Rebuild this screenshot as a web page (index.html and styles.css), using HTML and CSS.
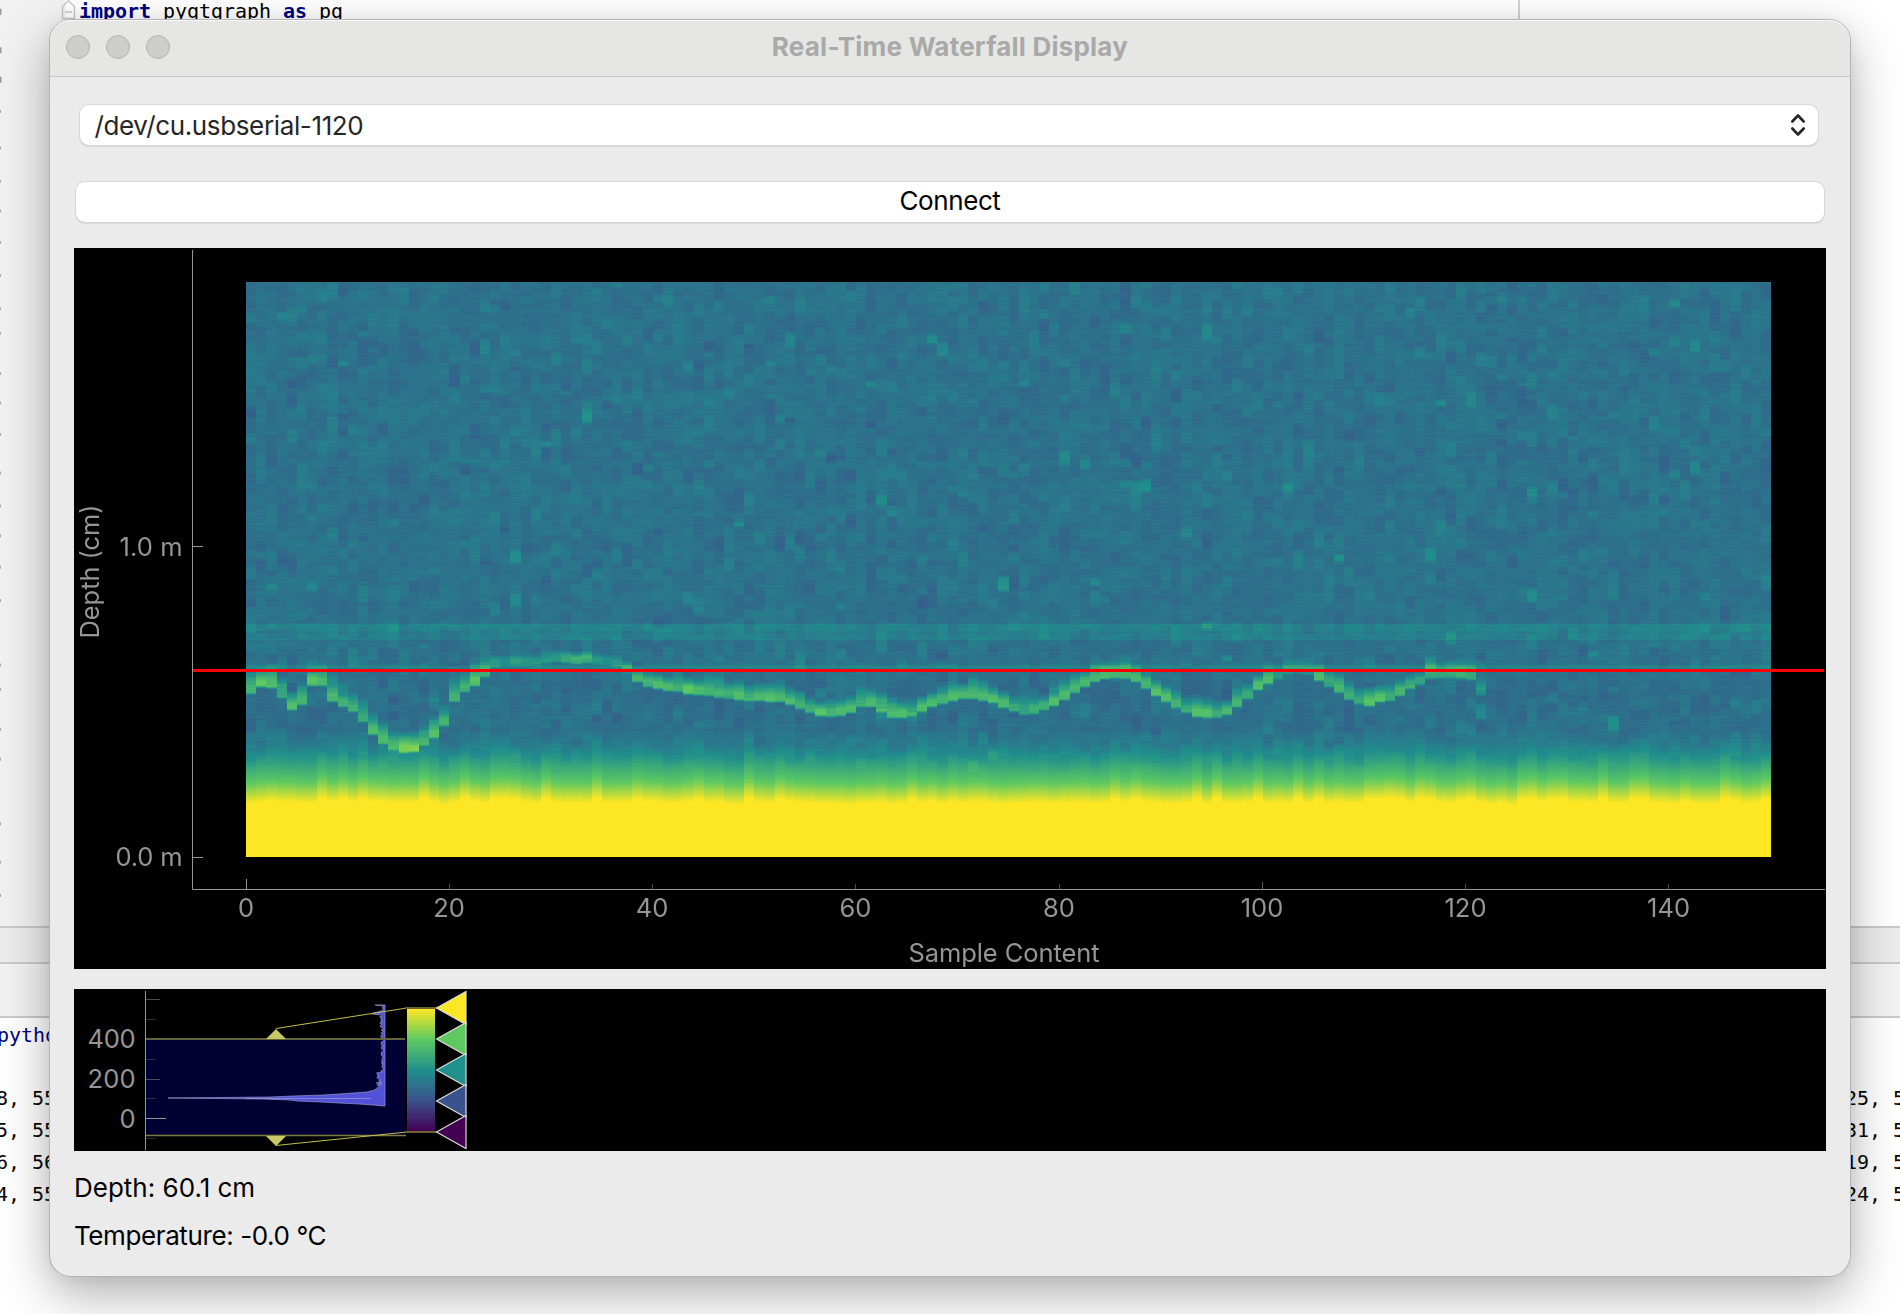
FILE: index.html
```html
<!DOCTYPE html>
<html lang="en">
<head>
<meta charset="utf-8">
<title>Real-Time Waterfall Display</title>
<link rel="stylesheet" href="styles.css">
</head>
<body>
<div class="ide">
  <div class="editor">
    <svg class="fold" width="15" height="20" viewBox="0 0 15 20"><path d="M1.500 18.500V6.500L7.500 .8l6 5.700v12zM4 12h7" fill="none" stroke="#c4c4c4" stroke-width="1.400"/></svg>
    <code class="code"><b>import</b> pyqtgraph <b>as</b> pg</code>
  </div>
  <div class="strip tabs"></div>
  <div class="strip tools"></div>
  <div class="console">
    <div class="path">pytho</div>
    <div class="line"><span>8, 55</span><span>25, 5</span></div>
    <div class="line"><span>5, 55</span><span>31, 5</span></div>
    <div class="line"><span>6, 56</span><span>19, 5</span></div>
    <div class="line"><span>4, 55</span><span>24, 5</span></div>
  </div>
</div>
<svg class="gutter" id="gutter" width="3" height="920"></svg>

<main class="window">
  <header class="titlebar">
    <i class="light"></i><i class="light"></i><i class="light"></i>
    <h1>Real-Time Waterfall Display</h1>
  </header>
  <div class="content">
    <div class="combo"><span>/dev/cu.usbserial-1120</span>
      <svg width="16" height="24" viewBox="0 0 16 24"><path d="M2.300 8.500L8 2.500l5.700 6M2.300 15.500L8 21.500l5.700-6" fill="none" stroke="#262626" stroke-width="2.600" stroke-linecap="round" stroke-linejoin="round"/></svg>
    </div>
    <button class="connect">Connect</button>
    <section class="plot">
      <canvas id="waterfall" width="1525" height="575"></canvas>
      <svg class="overlay" width="1752" height="722" viewBox="0 0 1752 722">
        <g stroke="#969696" stroke-width="1">
          <path d="M118.500 3V642.500H1751M118.500 299.500H129M118.500 610.500H129" fill="none"/>
          <path d="M172.500 632V642"/>
          <path d="M1188.500 635V642" opacity=".6"/>
          <path d="M375.500 637V642M578.500 637V642M781.500 637V642M985.500 637V642M1391.500 637V642M1594.500 637V642" opacity=".5"/>
        </g>
        <path d="M119 423.500H1750" stroke="#f00" stroke-width="3"/>
        <g class="axis" text-anchor="middle">
          <text x="172" y="670">0</text><text x="375" y="670">20</text><text x="578" y="670">40</text><text x="781.500" y="670">60</text><text x="985" y="670">80</text><text x="1188" y="670">100</text><text x="1391.500" y="670">120</text><text x="1594.500" y="670">140</text>
          <text x="930" y="715" textLength="191">Sample Content</text>
          <text transform="translate(25 324.500) rotate(-90)" textLength="134">Depth (cm)</text>
        </g>
        <g class="axis" text-anchor="end">
          <text x="108.500" y="308.500" textLength="63">1.0 m</text><text x="108.500" y="618.500" textLength="67">0.0 m</text>
        </g>
      </svg>
    </section>
    <section class="histogram">
      <svg width="500" height="162" viewBox="0 0 500 162">
        <defs><linearGradient id="viridis" x1="0" y1="1" x2="0" y2="0"><stop offset="0" stop-color="#440154"/><stop offset=".25" stop-color="#3a528b"/><stop offset=".5" stop-color="#20908c"/><stop offset=".75" stop-color="#5ec961"/><stop offset="1" stop-color="#fde724"/></linearGradient></defs>
        <rect x="72" y="50" width="259" height="97" fill="#000032"/>
        <g stroke="#969696" fill="none">
          <path d="M71.500 2V161"/><path d="M72 129.500H92"/>
          <path d="M72 10.500H86M72 50.500H86M72 90.500H86" opacity=".5"/>
          <path d="M72 30.500H82M72 70.500H82M72 109.500H82M72 149.500H82" opacity=".3"/>
        </g>
        <g class="axis" text-anchor="end"><text x="61.500" y="59" textLength="48">400</text><text x="61.500" y="99" textLength="48">200</text><text x="61.500" y="139">0</text></g>
        <path id="hist" fill="#5252d8" stroke="#a0a0d0" stroke-opacity=".8" stroke-width=".8"/>
        <path d="M72 50H331" stroke="#64643c" stroke-width="2"/>
        <path d="M72 146.500H332" stroke="#7d7d41" stroke-width="1.500"/>
        <path d="M192 50L202 40l10 10zM192 147l10 10 10-10z" fill="#c8c864"/>
        <path d="M202 39.500L333 19M202 156.500L333 143" fill="none" stroke="#c0c04c" stroke-width="1"/>
        <path d="M172 109.500H297" stroke="#b8b4dc" stroke-opacity=".5"/>
        <rect x="333" y="20" width="28" height="122" fill="url(#viridis)"/>
        <path d="M331 19H363M331 143H363" stroke="#6a6430" stroke-width="2"/>
        <g stroke="#ddd" stroke-width="1.200">
          <path d="M362.500 19L392 2.500V35.500z" fill="#fde724"/>
          <path d="M362.500 50L392 33.500V66.500z" fill="#5ec961"/>
          <path d="M362.500 81L392 64.500V97.500z" fill="#20908c"/>
          <path d="M362.500 112L392 95.500V128.500z" fill="#3a528b"/>
          <path d="M362.500 143L392 126.500V159.500z" fill="#440154"/>
        </g>
      </svg>
    </section>
    <p class="status depth">Depth: 60.1 cm</p>
    <p class="status temp">Temperature: -0.0 °C</p>
  </div>
</main>
<script src="app.js"></script>
</body>
</html>
```

FILE: styles.css
```css
* { box-sizing: border-box; }
body { margin: 0; width: 1900px; height: 1314px; overflow: hidden; position: relative; background: #fff; font-family: Inter, "Liberation Sans", sans-serif; }

.ide { display: flex; flex-direction: column; height: 1314px; font: 20px/32px "DejaVu Sans Mono", "Liberation Mono", monospace; letter-spacing: -.04px; }
.editor { height: 926px; display: flex; align-items: flex-start; width: 1520px; padding-left: 61px; border-right: 2px solid #d2d2d2; background: linear-gradient(90deg, #f1f1f1 66px, #fff 66px); }
.fold { flex: none; margin-right: 3px; }
.code { font: inherit; white-space: pre; line-height: 22px; }
.code b { color: #000080; }
.strip { flex: none; border-top: 2px solid #c9c9c9; background: #f2f2f2; }
.tabs { height: 36px; background: #ececec; }
.tools { height: 54px; }
.console { flex: 1; border-top: 2px solid #c9c9c9; color: #080808; }
.path { color: #00007f; margin: 1px 0 31px -3px; }
.line { display: flex; justify-content: space-between; margin-left: -4px; width: 1909px; }
.gutter { position: absolute; left: 0; top: 0; }

.window { position: absolute; left: 50px; top: 20px; width: 1800px; height: 1256px; background: #ebebeb; border-radius: 21px; box-shadow: 0 0 0 1px #b4b4b4, 0 18px 50px rgba(0,0,0,.32), 0 0 16px rgba(0,0,0,.06); overflow: visible; }
.titlebar { height: 57px; display: flex; align-items: center; gap: 16px; padding: 0 0 2px 16px; background: #e6e6e4; border-bottom: 1px solid #c6c6c6; border-radius: 21px 21px 0 0; box-shadow: inset 0 1px #f8f8f8; }
.light { width: 24px; height: 24px; border-radius: 50%; background: #cdcdcc; border: 1px solid #b4b4b3; }
h1 { flex: 1; margin: 0 136px 2px 0; text-align: center; font-size: 26px; font-weight: 700; letter-spacing: .22px; color: #a9a9a8; }
.content { padding: 28px 24px 0; display: flex; flex-direction: column; }
.combo, .connect { background: #fff; border: 0; border-radius: 9px; box-shadow: 0 0 0 1px #d8d8d8, 0 1px 1.500px #999; font: 26px Inter, sans-serif; }
.combo { height: 40px; margin: 0 8px 0 5.500px; padding: 0 12px 0 15px; display: flex; align-items: center; justify-content: space-between; color: #262626; letter-spacing: -.36px; }
.connect { height: 40px; margin: 37px 2px 0; padding: 0 0 4px; color: #000; letter-spacing: -.42px; }
.plot { position: relative; margin-top: 26px; height: 721px; background: #000; padding: 34px 0 0 172px; }
.plot canvas { display: block; }
.overlay { position: absolute; left: 0; top: -1px; }
.axis { font-size: 25.500px; fill: #969696; }
.histogram { margin-top: 20px; height: 162px; background: #000; }
.histogram svg { display: block; }
.status { margin: 0; font-size: 26px; line-height: 32px; color: #000; }
.depth { margin-top: 21px; }
.temp { margin-top: 16px; letter-spacing: -.4px; }
```

FILE: app.js
```js
// Seeded generator so that every load draws the same echo data
let seed = 20417;
function rnd() {
  seed = (seed + 0x6D2B79F5) | 0;
  let t = Math.imul(seed ^ (seed >>> 15), 1 | seed);
  t = (t + Math.imul(t ^ (t >>> 7), 61 | t)) ^ t;
  return ((t ^ (t >>> 14)) >>> 0) / 4294967296;
}
const gauss = () => rnd() + rnd() + rnd() + rnd() - 2;

const STOPS = [[68, 1, 84], [58, 82, 139], [32, 144, 140], [94, 201, 97], [253, 231, 36]];
function viridis(t) {
  t = Math.max(0, Math.min(1, t)) * 4;
  const i = Math.min(3, Math.floor(t)), f = t - i;
  return STOPS[i].map((c, k) => c + (STOPS[i + 1][k] - c) * f);
}

// Lower edge of the bottom echo for each sample, in pixels from the top of the image
const ECHO = [413,406,407,417,429,424,405,405,421,426,431,441,454,463,469,472,471,465,457,445,421,411,405,396,386,385,385,385,384,382,381,382,383,382,383,384,386,392,401,406,408,410,411,413,414,
  415,417,418,419,420,420,421,421,424,428,432,435,436,435,432,426,426,431,437,437,435,431,426,423,420,418,418,420,422,427,431,434,433,429,425,419,412,406,401,398,397,398,401,408,415,421,427,432,436,437,437,434,426,418,409,
  403,398,393,392,394,400,406,412,419,423,425,421,420,415,408,404,398,397,397,397,399,414];

const canvas = document.getElementById('waterfall');
const ctx = canvas.getContext('2d');
const W = 1525, H = 575, N = 150;
const img = ctx.createImageData(W, H);
const rows = Array.from({ length: H }, () => gauss() * 0.009);
const ramp = [[448, 0], [460, .03], [473, .11], [500, .37], [521, .63], [530, .8]];
function floorEcho(y) {
  if (y <= ramp[0][0]) return 0;
  for (let i = 1; i < ramp.length; i++) {
    if (y < ramp[i][0]) {
      const [a, u] = ramp[i - 1], [b, v] = ramp[i];
      return u + (v - u) * (y - a) / (b - a);
    }
  }
  return 1;
}
for (let c = 0; c < N; c++) {
  const x0 = Math.round(c * W / N), x1 = Math.round((c + 1) * W / N);
  const shift = rnd() < .2 ? 3 + rnd() * 2 : gauss() * 1.4;
  const strength = .24 + rnd() * .1, tail = (c < 23 ? 13 : 9) + rnd() * 9;
  const bias = gauss() * .006;
  let slow = 0, target = 0, left = 0;
  for (let y = 0; y < H; y++) {
    if (left-- <= 0) { target = gauss() * .042; if (rnd() < .012) target += .085; left = 2 + rnd() * 12; }
    slow += (target - slow) * .4;
    let t = .38 + bias + slow + gauss() * .016 + rows[y];
    if (y > 341 && y < 358) t += y < 349 ? .075 : (y > 351 ? .06 : .035);
    if (y > 382 && y < 388) t += .07;
    if (y > 400 && y < 450) t -= .012;
    if (c < ECHO.length) {
      const d = ECHO[c] - y;
      if (d > 0 && d < tail + 8) {
        const high = c > 23 && c < 38;
        const amp = (c === 15 || c === 16) ? .45 : high ? (c > 30 && c < 34 ? .24 : .15) : c === 121 ? .15 : (c > 100 && c < 105) ? .15 : c > 114 ? .21 : strength;
        t += amp * (d < 3 ? d / 3 : d < 8 ? 1 : Math.max(0, 1 - (d - 8) / (high ? 6 : tail)));
      }
    }
    const f = floorEcho(y + shift);
    t = f > 0 ? t * (1 - Math.min(1, f * 3)) + (.378 * Math.min(1, f * 3)) + f : t;
    const rgb = viridis(t);
    for (let x = x0; x < x1; x++) {
      const p = (y * W + x) * 4;
      img.data[p] = rgb[0]; img.data[p + 1] = rgb[1]; img.data[p + 2] = rgb[2]; img.data[p + 3] = 255;
    }
  }
}
ctx.putImageData(img, 0, 0);

// Level histogram: counts grow leftwards from the baseline
const BASE = 311;
let d = `M${BASE} 16`;
const peak = { 101: 10, 102: 14, 103: 18, 104: 32, 105: 46, 106: 62, 107: 92, 108: 115, 109: 217, 110: 122, 111: 95, 112: 88, 113: 64, 114: 46, 115: 26, 116: 12 };
for (let y = 16; y <= 117; y++) {
  let w;
  if (y < 17) w = 10;
  else if (y < 22) w = 1 + rnd() * 2;
  else if (y < 28) w = 3 + rnd() * 9 + (y === 25 ? 6 : 0);
  else if (y < 40) w = 1 + rnd() * 5;
  else if (y < 84) w = 1 + rnd() * 3.5;
  else if (y < 97) w = 3 + rnd() * 6;
  else w = peak[y] || (y < 101 ? 5 + (y - 97) * 1.5 : 1);
  d += `L${BASE - w} ${y}`;
}
document.getElementById('hist').setAttribute('d', d + `L${BASE} 117z`);

// Clipped line numbers at the left edge of the editor gutter
const MARKS = [5, 27, 44, 63, 84, 103, 120, 138, 157, 176, 190, 213, 230, 248, 270, 289, 306, 324, 343, 380, 394, 417, 434, 471, 493, 512];
document.getElementById('gutter').innerHTML = MARKS
  .map((y, i) => `<path d="M0 ${y * 1.746}v${i < 3 ? 6 : 3}" stroke="#999" stroke-width="${i < 3 ? 3 : 1.6}"/>`).join('');
```
